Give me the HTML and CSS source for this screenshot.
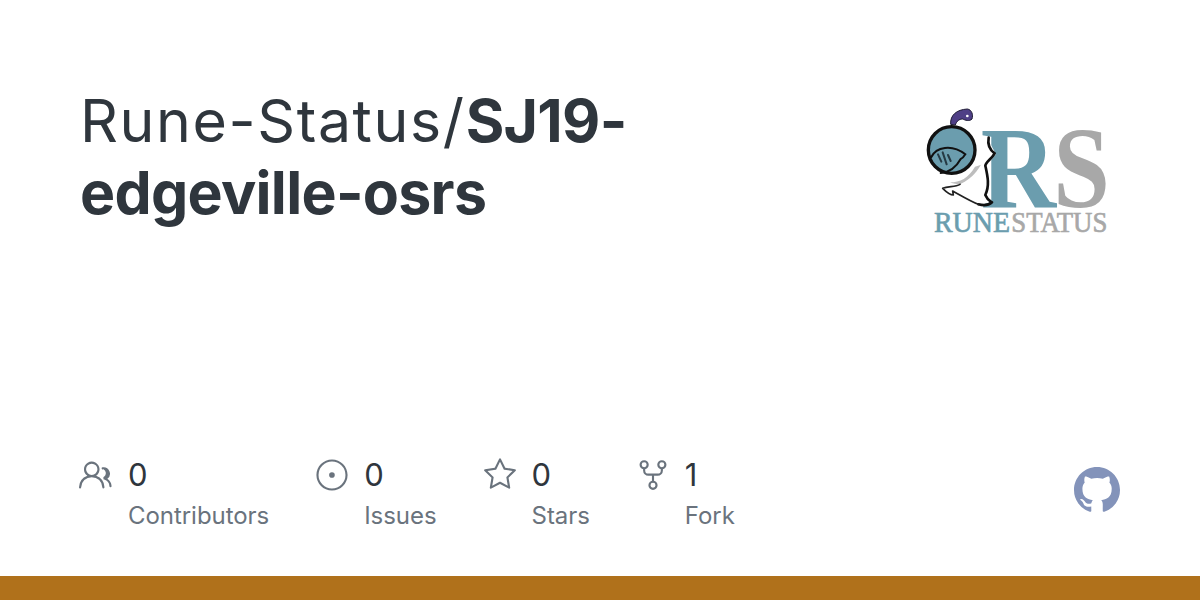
FILE: index.html
```html
<!DOCTYPE html>
<html lang="en">
<head>
	<meta charset="UTF-8">
	<title>Rune-Status/SJ19-edgeville-osrs</title>
	<link rel="stylesheet" href="styles.css">
</head>
<body>
	<div class="card">
		<div class="top">
			<h1 class="title">Rune-Status/<b>SJ19-<br>edgeville-osrs</b></h1>
			<svg class="logo" viewBox="0 0 630 450">
				<text class="logo-r" x="212" y="335" textLength="226" lengthAdjust="spacingAndGlyphs">R</text>
				<text class="logo-s" x="430" y="335" textLength="170" lengthAdjust="spacingAndGlyphs">S</text>
				<text class="logo-rune" x="72" y="410" textLength="228" lengthAdjust="spacingAndGlyphs">RUNE</text>
				<text class="logo-status" x="304" y="410" textLength="288" lengthAdjust="spacingAndGlyphs">STATUS</text>
				<path class="knight-shadow" d="M195 215C175 250 150 262 120 262 165 280 218 258 228 205Z"/>
				<path class="knight-body" d="M232 130L258 178 228 212 240 322 205 332 130 292 100 280 150 268C190 250 215 215 225 180Z"/>
				<path class="knight-edge" d="M236 128C232 150 240 165 254 175 245 192 228 200 226 212 232 240 240 270 226 300 232 315 240 318 246 322 235 332 220 332 205 328"/>
				<path class="knight-foot" d="M205 328C180 318 150 300 128 288L130 300C120 300 108 290 98 280 115 272 135 278 150 268"/>
				<path class="knight-plume" d="M122 88C120 60 140 44 172 42 186 44 190 60 186 72 178 80 166 76 158 72 148 72 140 78 136 90Z"/>
				<circle class="knight-spot" cx="172" cy="63" r="4"/>
				<circle class="knight-head" cx="125" cy="165" r="70"/>
				<path class="knight-visor" d="M64 186C78 156 125 146 166 178 160 188 158 190 152 192M152 192C140 214 120 232 92 234"/>
				<path class="knight-slit" d="M84 178L94 200M98 172L110 208M114 180L122 198"/>
			</svg>
		</div>
		<div class="stats">
			<div class="stat">
				<div class="stat-top">
					<svg class="icon" viewBox="0 0 24 24"><path d="M3.5 8a5.5 5.5 0 1 1 8.596 4.547 9.005 9.005 0 0 1 5.9 8.18.751.751 0 0 1-1.5.045 7.5 7.5 0 0 0-14.993 0 .75.75 0 0 1-1.499-.044 9.005 9.005 0 0 1 5.9-8.181A5.496 5.496 0 0 1 3.5 8ZM9 4a4 4 0 1 0 0 8 4 4 0 0 0 0-8Zm8.29 4c-.148 0-.292.01-.434.03a.75.75 0 1 1-.212-1.484 4.53 4.53 0 0 1 3.38 8.097 6.69 6.69 0 0 1 2.956 5.18.75.75 0 1 1-1.5.07 5.193 5.193 0 0 0-3.696-4.684l-.534-.16v-1.676l.41-.209A3.03 3.03 0 0 0 17.29 8Z"/></svg>
					<span class="num">0</span>
				</div>
				<div class="label">Contributors</div>
			</div>
			<div class="stat">
				<div class="stat-top">
					<svg class="icon" viewBox="0 0 24 24"><path d="M12 1c6.075 0 11 4.925 11 11s-4.925 11-11 11S1 18.075 1 12 5.925 1 12 1ZM2.5 12a9.5 9.5 0 0 0 9.5 9.5 9.5 9.5 0 0 0 9.5-9.5A9.5 9.5 0 0 0 12 2.5 9.5 9.5 0 0 0 2.5 12Zm9.5 2a2 2 0 1 1-.001-3.999A2 2 0 0 1 12 14Z"/></svg>
					<span class="num">0</span>
				</div>
				<div class="label">Issues</div>
			</div>
			<div class="stat">
				<div class="stat-top">
					<svg class="icon" viewBox="0 0 24 24"><path d="M12 .25a.75.75 0 0 1 .673.418l3.058 6.197 6.839.994a.75.75 0 0 1 .415 1.279l-4.948 4.823 1.168 6.811a.751.751 0 0 1-1.088.791L12 18.347l-6.117 3.216a.75.75 0 0 1-1.088-.79l1.168-6.812-4.948-4.823a.75.75 0 0 1 .416-1.28l6.838-.993L11.328.668A.75.75 0 0 1 12 .25Zm0 2.445L9.44 7.882a.75.75 0 0 1-.565.41l-5.725.832 4.143 4.038a.748.748 0 0 1 .215.664l-.978 5.702 5.121-2.692a.75.75 0 0 1 .698 0l5.12 2.692-.977-5.702a.748.748 0 0 1 .215-.664l4.143-4.038-5.725-.831a.75.75 0 0 1-.565-.41L12 2.694Z"/></svg>
					<span class="num">0</span>
				</div>
				<div class="label">Stars</div>
			</div>
			<div class="stat">
				<div class="stat-top">
					<svg class="icon" viewBox="0 0 24 24"><path d="M12 21a1.75 1.75 0 1 1 0-3.5 1.75 1.75 0 0 1 0 3.5Zm-3.25-1.75a3.25 3.25 0 1 0 6.5 0 3.25 3.25 0 0 0-6.5 0Zm-3-12.75a1.75 1.75 0 1 1 0-3.5 1.75 1.75 0 0 1 0 3.5ZM2.5 4.75a3.25 3.25 0 1 0 6.5 0 3.25 3.25 0 0 0-6.5 0ZM18.25 6.5a1.75 1.75 0 1 1 0-3.5 1.75 1.75 0 0 1 0 3.5ZM15 4.75a3.25 3.25 0 1 0 6.5 0 3.25 3.25 0 0 0-6.5 0Z"/><path d="M6.5 7.75v1A2.25 2.25 0 0 0 8.75 11h6.5a2.25 2.25 0 0 0 2.25-2.25v-1H19v1a3.75 3.75 0 0 1-3.75 3.75h-2.5v4.5h-1.5v-4.5h-2.5A3.75 3.75 0 0 1 5 8.75v-1Z"/></svg>
					<span class="num">1</span>
				</div>
				<div class="label">Fork</div>
			</div>
			<svg class="mark" viewBox="0 0 16 16"><path d="M8 0c4.42 0 8 3.58 8 8a8.013 8.013 0 0 1-5.45 7.59c-.4.08-.55-.17-.55-.38 0-.27.01-1.13.01-2.2 0-.75-.25-1.23-.54-1.48 1.78-.2 3.65-.88 3.65-3.95 0-.88-.31-1.59-.82-2.15.08-.2.36-1.02-.08-2.12 0 0-.67-.22-2.2.82-.64-.18-1.32-.27-2-.27-.68 0-1.36.09-2 .27-1.53-1.03-2.2-.82-2.2-.82-.44 1.1-.16 1.92-.08 2.12-.51.56-.82 1.28-.82 2.15 0 3.06 1.86 3.75 3.64 3.95-.23.2-.44.55-.51 1.07-.46.21-1.61.55-2.33-.66-.15-.24-.6-.83-1.23-.82-.67.01-.27.38.01.53.34.19.73.9.82 1.13.16.45.68 1.31 2.69.94 0 .67.01 1.3.01 1.49 0 .21-.15.45-.55.38A7.995 7.995 0 0 1 0 8c0-4.42 3.58-8 8-8Z"/></svg>
		</div>
	</div>
	<div class="bar"></div>
</body>
</html>
```

FILE: styles.css
```css
html,body{margin:0;height:100%;}
body{display:flex;flex-direction:column;background:#fff;font-family:Inter,"Liberation Sans",sans-serif;color:#24292f;overflow:hidden;}

.card{flex:1;display:flex;flex-direction:column;justify-content:space-between;padding:85px 80px 0;}
.top{display:flex;justify-content:space-between;align-items:flex-start;}
.title{margin:0;width:600px;font-size:59px;line-height:72px;font-weight:375;color:#2f363d;letter-spacing:1.6px;}
.title b{font-weight:700;letter-spacing:-.7px;}

.logo{flex:none;width:210px;height:150px;margin:10px 0 0 0;}
.logo text{font-family:"Liberation Serif",serif;}
.logo-r{font-size:350px;font-weight:700;fill:#6b9dae;}
.logo-s{font-size:350px;font-weight:700;fill:#a8a8a8;}
.logo-rune{font-size:88px;fill:#6b9dae;stroke:#6b9dae;stroke-width:2;}
.logo-status{font-size:88px;fill:#a8a8a8;stroke:#a8a8a8;stroke-width:2;}
.knight-shadow{fill:#bdbdbd;}
.knight-body{fill:#fff;}
.knight-edge{fill:none;stroke:#111;stroke-width:8;stroke-linejoin:round;stroke-linecap:round;}
.knight-foot{fill:none;stroke:#222;stroke-width:5;stroke-linejoin:round;stroke-linecap:round;}
.knight-plume{fill:#4f3f86;stroke:#1d1a33;stroke-width:3;}
.knight-spot{fill:#fff;}
.knight-head{fill:#6b9dae;stroke:#111;stroke-width:10;}
.knight-visor{fill:none;stroke:#111;stroke-width:6;stroke-linecap:round;}
.knight-slit{fill:none;stroke:#263a44;stroke-width:6;stroke-linecap:round;}

.stats{display:flex;align-items:flex-start;gap:47px;padding-bottom:44px;}
.stat-top{display:flex;align-items:center;gap:15px;height:40px;}
.icon{width:34px;height:34px;margin-left:-1px;fill:#6a737d;}
.num{font-size:31px;line-height:40px;color:#2f363d;}
.label{margin:5px 0 0 48px;font-size:24px;line-height:32px;color:#6a737d;letter-spacing:-.05px;}
.mark{width:46px;height:46px;margin:12px 0 0 auto;fill:#8393ba;}

.bar{flex:none;height:24px;background:#b0711b;}
```
